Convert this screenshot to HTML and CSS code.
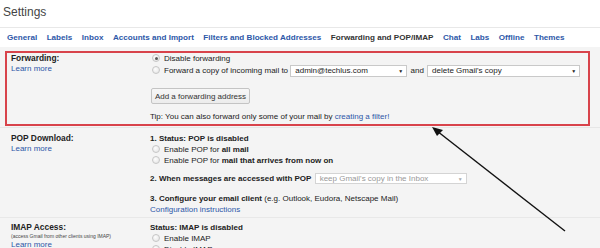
FILE: index.html
```html
<!DOCTYPE html>
<html lang="en">

<head>
    <meta charset="UTF-8">
    <meta name="viewport" content="width=device-width, initial-scale=1.0">
    <title>Settings</title>
    <link rel="stylesheet" href="styles.css">
</head>

<body>

    <div class="top">
        <h1 class="title">Settings</h1>
    </div>

    <div class="tabs">
        <a class="tab">General</a>
        <a class="tab">Labels</a>
        <a class="tab">Inbox</a>
        <a class="tab">Accounts and Import</a>
        <a class="tab">Filters and Blocked Addresses</a>
        <span class="tab active">Forwarding and POP/IMAP</span>
        <a class="tab">Chat</a>
        <a class="tab">Labs</a>
        <a class="tab">Offline</a>
        <a class="tab">Themes</a>
    </div>

    <div class="content">

        <!-- forwarding, boxed in red -->
        <div class="fwd-wrap">
            <div class="row boxed">
                <div class="label">
                    <b>Forwarding:</b>
                    <a class="link">Learn more</a>
                </div>
                <div class="opts">
                    <div class="line"><span class="radio on"></span>Disable forwarding</div>
                    <div class="line tall"><span class="radio"></span>Forward a copy of incoming mail to <span class="select sel-addr">admin@techlus.com<i>&#9660;</i></span> and <span class="select sel-action">delete Gmail's copy<i>&#9660;</i></span></div>
                    <button class="btn">Add a forwarding address</button>
                    <div class="line tip">Tip: You can also forward only some of your mail by <a class="link">creating a filter!</a></div>
                </div>
            </div>
        </div>

        <div class="row pop">
            <div class="label">
                <b>POP Download:</b>
                <a class="link">Learn more</a>
            </div>
            <div class="opts">
                <div class="line"><b>1. Status: POP is disabled</b></div>
                <div class="line"><span class="radio"></span>Enable POP for <b>all mail</b></div>
                <div class="line"><span class="radio"></span>Enable POP for <b>mail that arrives from now on</b></div>
                <div class="line step2"><b>2. When messages are accessed with POP</b> <span class="select sel-pop">keep Gmail's copy in the Inbox<i>&#9660;</i></span></div>
                <div class="line step3"><b>3. Configure your email client</b> (e.g. Outlook, Eudora, Netscape Mail)</div>
                <div class="line"><a class="link">Configuration instructions</a></div>
            </div>
        </div>

        <div class="row imap">
            <div class="label">
                <b>IMAP Access:</b>
                <span class="tiny">(access Gmail from other clients using IMAP)</span>
                <a class="link">Learn more</a>
            </div>
            <div class="opts">
                <div class="line"><b>Status: IMAP is disabled</b></div>
                <div class="line"><span class="radio"></span>Enable IMAP</div>
                <div class="line"><span class="radio on"></span>Disable IMAP</div>
            </div>
        </div>

    </div>

    <!-- annotation arrow pointing at the box -->
    <svg class="arrow" width="600" height="248" viewBox="0 0 600 248">
        <line x1="565" y1="231" x2="437" y2="131" stroke="#111" stroke-width="1.4" />
        <polygon points="432,127 443,130 437,136" fill="#111" />
    </svg>

</body>

</html>
```

FILE: styles.css
```css
*,
*::after,
*::before {
    margin: 0;
    padding: 0;
    box-sizing: border-box;
}

body {
    width: 600px;
    height: 248px;
    overflow: hidden;
    font-family: "Liberation Sans", Arial, sans-serif;
    font-size: 8px;
    color: #222;
    background: #f4f4f4;
}

.top {
    background: #fff;
    height: 28px;
    border-bottom: 1px solid #e8e8e8;
    padding: 5px 0 0 3px;
}

.title {
    font-size: 12px;
    font-weight: normal;
    color: #444;
    line-height: 15px;
}

.tabs {
    background: #fff;
    height: 19px;
    display: flex;
    align-items: center;
    gap: 9.5px;
    padding-left: 7px;
    font-size: 8.1px;
    font-weight: bold;
}

.tab {
    color: #2d57a8;
}

.tab.active {
    color: #333;
}

.link {
    color: #2d57a8;
}

.row {
    display: grid;
    grid-template-columns: 139px 1fr;
}

.label {
    display: flex;
    flex-direction: column;
    line-height: 10px;
}

.label b {
    font-size: 8.4px;
    line-height: 11px;
}

.line {
    height: 11px;
    line-height: 11px;
    white-space: nowrap;
}

.fwd-wrap {
    padding: 4px 10px 1px 5px;
    border-bottom: 1px solid #e6e6e6;
}

.boxed {
    border: 2px solid #d8434b;
    padding: 0 0 2px 4px;
}

.line.tall {
    height: 14px;
    line-height: 14px;
}

.radio {
    display: inline-block;
    vertical-align: -1px;
    width: 8px;
    height: 8px;
    border-radius: 50%;
    border: 1px solid #c6c6c6;
    background: radial-gradient(circle at 40% 35%, #fdfdfd, #e2e2e2);
    margin: 0 4px 0 2px;
    position: relative;
}

.radio.on::after {
    content: "";
    position: absolute;
    left: 1.5px;
    top: 1.5px;
    width: 3px;
    height: 3px;
    border-radius: 50%;
    background: #5a5a5a;
}

.select {
    display: inline-flex;
    align-items: center;
    justify-content: space-between;
    vertical-align: middle;
    height: 12px;
    line-height: 10px;
    background: #fff;
    border: 1px solid #c9c9c9;
    padding: 0 3px 0 4px;
    color: #222;
}

.select i {
    font-style: normal;
    font-size: 5px;
}

.sel-addr {
    width: 117px;
    margin-right: 1px;
}

.sel-action {
    width: 153px;
    margin-left: 1px;
}

.btn {
    display: block;
    width: 99px;
    height: 16px;
    margin: 10px 0 0 1px;
    font-family: inherit;
    font-size: 8px;
    color: #333;
    background: linear-gradient(#f7f7f7, #ececec);
    border: 1px solid #c4c4c4;
    border-radius: 2px;
}

.tip {
    margin-top: 7px;
}

.pop {
    padding: 5px 0 2px 11px;
    border-bottom: 1px solid #e8e8e8;
}

.step2 {
    margin-top: 7px;
}

.sel-pop {
    width: 152px;
    height: 11px;
    margin-left: 1px;
    color: #999;
    border-color: #d4d4d4;
}

.sel-pop i {
    color: #aaa;
}

.step3 {
    margin-top: 9px;
}

.imap {
    padding: 4px 0 0 11px;
}

.tiny {
    font-size: 5px;
    line-height: 7px;
    color: #444;
}

.imap .link {
    line-height: 9px;
}

.arrow {
    position: absolute;
    left: 0;
    top: 0;
}
```
